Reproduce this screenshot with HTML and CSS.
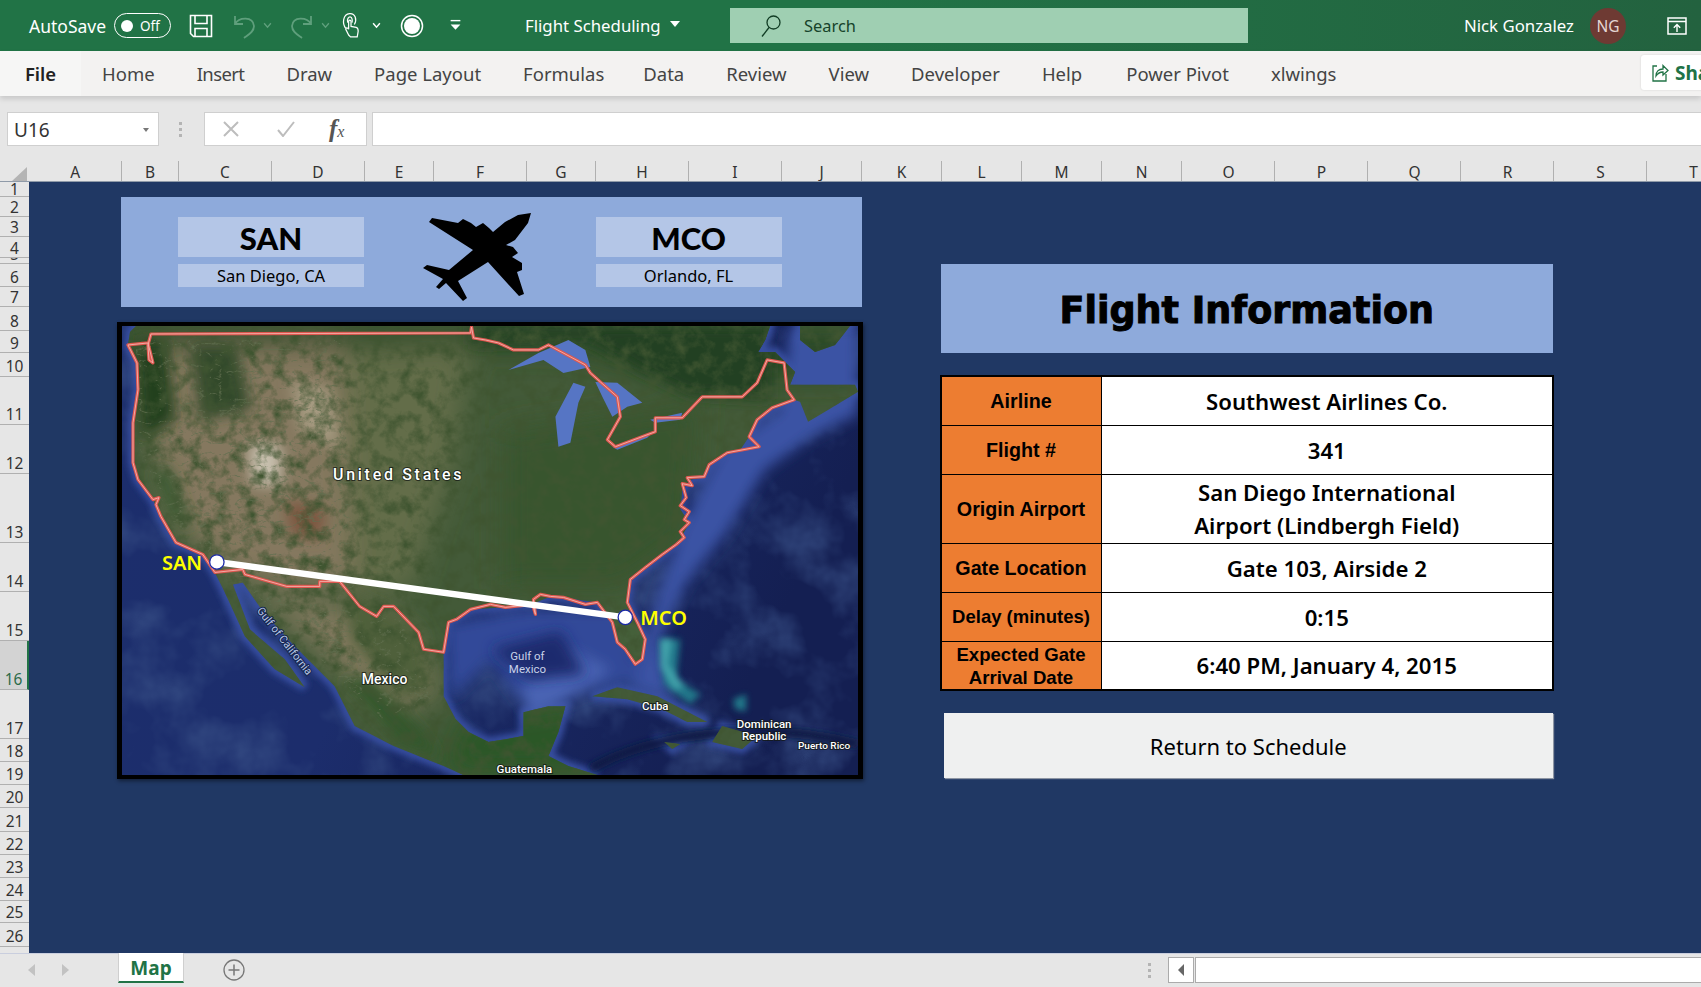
FILE: index.html
```html
<!DOCTYPE html>
<html lang="en">
<head>
<meta charset="utf-8">
<title>Flight Scheduling - Excel</title>
<link rel="stylesheet" href="styles.css">
</head>
<body>
<div class="app">
  <header class="titlebar">
    <span class="autosave">AutoSave</span>
    <span class="toggle"><i class="knob"></i><span class="toggle-text">Off</span></span>
    <svg class="qa qa-save" viewBox="0 0 24 24"><path d="M1.500 1.500H22.500V22.500H4.500L1.500 19.500Z M6 1.500V9.500H18V1.500 M6 22.500V14.500H18V22.500" fill="none" stroke="#fff" stroke-width="1.600"/></svg>
    <svg class="qa qa-undo" viewBox="0 0 26 26"><path d="M4 3V11H12 M4 11C8 4 22 3 23 13C23 19 17 22 13 25" fill="none" stroke="#5f9f7c" stroke-width="1.800"/></svg>
    <svg class="chev dim" viewBox="0 0 8 6"><path d="M1 1L4 4.500L7 1" fill="none" stroke="#5f9f7c" stroke-width="1.200"/></svg>
    <svg class="qa qa-redo" viewBox="0 0 26 26"><path d="M22 3V11H14 M22 11C18 4 4 3 3 13C3 19 9 22 13 25" fill="none" stroke="#5f9f7c" stroke-width="1.800"/></svg>
    <svg class="chev dim" viewBox="0 0 8 6"><path d="M1 1L4 4.500L7 1" fill="none" stroke="#5f9f7c" stroke-width="1.200"/></svg>
    <svg class="qa qa-touch" viewBox="0 0 22 28"><path d="M5 17C1 12 2 2 9 1.500C15 1 17 8 14 13 M7 11C6 7 8 5 9.500 5C12 5 12 9 11.500 11" fill="none" stroke="#fff" stroke-width="1.300"/><path d="M8 24L5 18C5 16 7 16 8 18V9.500C8 8 10.500 8 10.500 9.500V15L16 16C18 16.500 18 18 18 20L17 26H10Z" fill="#217346" stroke="#fff" stroke-width="1.300"/></svg>
    <svg class="chev chev-touch" viewBox="0 0 8 6"><path d="M1 1L4 4.500L7 1" fill="none" stroke="#fff" stroke-width="1.300"/></svg>
    <svg class="qa qa-rec" viewBox="0 0 24 24"><circle cx="12" cy="12" r="10.500" fill="none" stroke="#fff" stroke-width="1.500"/><circle cx="12" cy="12" r="8" fill="#fff"/></svg>
    <svg class="qa qa-more" viewBox="0 0 12 12"><path d="M1.500 1.500H10.500" stroke="#fff" stroke-width="1.300"/><path d="M1.500 5H10.500L6 10Z" fill="#fff"/></svg>
    <span class="doc">Flight Scheduling</span>
    <i class="doc-caret"></i>
    <div class="search">
      <svg class="search-icon" viewBox="0 0 22 24"><circle cx="13.500" cy="8.500" r="6.500" fill="none" stroke="#123d25" stroke-width="1.300"/><path d="M9 13.500L2 22.500" stroke="#123d25" stroke-width="1.300"/></svg>
      <span>Search</span>
    </div>
    <span class="user">Nick Gonzalez</span>
    <span class="avatar">NG</span>
    <svg class="display-icon" viewBox="0 0 20 18"><rect x="1" y="1" width="18" height="16" fill="none" stroke="#fff" stroke-width="1.500"/><path d="M1 4.500H19" stroke="#fff" stroke-width="1.500"/><path d="M10 15V8M6.800 10.800L10 7.500L13.200 10.800" fill="none" stroke="#fff" stroke-width="1.400"/></svg>
  </header>

  <nav class="ribbon">
    <span class="tab tab-file">File</span>
    <span class="tab">Home</span>
    <span class="tab tab-insert">Insert</span>
    <span class="tab">Draw</span>
    <span class="tab">Page Layout</span>
    <span class="tab tab-formulas">Formulas</span>
    <span class="tab">Data</span>
    <span class="tab">Review</span>
    <span class="tab">View</span>
    <span class="tab">Developer</span>
    <span class="tab tab-help">Help</span>
    <span class="tab">Power Pivot</span>
    <span class="tab">xlwings</span>
    <span class="share">
      <svg class="share-icon" viewBox="0 0 18 20"><path d="M6 3H2V18H15V11" fill="none" stroke="#217346" stroke-width="1.300"/><path d="M5 13C5 8 8 6 12 6V2.500L17 7.500L12 12V9C9 9 7 10 5 13Z" fill="none" stroke="#217346" stroke-width="1.300"/></svg>
      <b>Share</b>
    </span>
  </nav>

  <section class="formula">
    <div class="namebox"><span>U16</span><i class="mini-caret"></i></div>
    <div class="grip"><i></i><i></i><i></i></div>
    <div class="fxbox">
      <svg class="fx-x" viewBox="0 0 16 16"><path d="M1 1L15 15M15 1L1 15" stroke="#bdbdbd" stroke-width="2"/></svg>
      <svg class="fx-c" viewBox="0 0 18 16"><path d="M1 9L6 15L17 1" fill="none" stroke="#bdbdbd" stroke-width="2"/></svg>
      <span class="fx-f"><em>f</em><small>x</small></span>
    </div>
    <div class="input"></div>
  </section>

  <div class="colhead">
    <div class="corner"><i></i></div>
    <span>A</span><span>B</span><span>C</span><span>D</span><span>E</span><span>F</span><span>G</span><span>H</span><span>I</span><span>J</span><span>K</span><span>L</span><span>M</span><span>N</span><span>O</span><span>P</span><span>Q</span><span>R</span><span>S</span><span>T</span>
  </div>

  <main class="body">
    <div class="rowhead">
      <span>1</span><span>2</span><span>3</span><span>4</span><span>5</span><span>6</span><span>7</span><span>8</span><span>9</span><span class="tall">10</span><span class="tall">11</span><span class="tall">12</span><span class="tall">13</span><span class="tall">14</span><span class="tall">15</span><span class="tall sel">16</span><span class="tall">17</span><span class="tall">18</span><span class="tall">19</span><span class="tall">20</span><span class="tall">21</span><span class="tall">22</span><span class="tall">23</span><span class="tall">24</span><span class="tall">25</span><span class="tall">26</span><span class="tall">27</span>
    </div>
    <div class="sheet">
      <div class="route">
        <div class="airport">
          <div class="code">SAN</div>
          <div class="city">San Diego, CA</div>
        </div>
        <svg class="plane" viewBox="423 212 109 90"><path d="M531 213L528 223L515 240L506 245L513 247L518 253L512 257L522 263L522 270L517 272L524 294L519 296L488 262L458 281L467 298L463 301L446 283L439 289L436 287L443 279L423 268L427 265L449 270L473 250L429 222L432 218L458 223L463 219L471 223L476 227L483 223L489 228L493 232L505 222L518 215Z" fill="#000"/></svg>
        <div class="airport">
          <div class="code">MCO</div>
          <div class="city">Orlando, FL</div>
        </div>
      </div>

      <div class="mapframe">
        <svg class="map" viewBox="121 326 737 450" preserveAspectRatio="none">
          <defs>
            <path id="land" d="M127 345L129 332L135 326L770 326L765 340L758 352L775 352L795 372L790 385L805 385L855 385L858 392L825 412L808 422L800 402L794 400L772 408L757 420L749 437L740 450L727 453L709 465L704 477L690 480L682 490L680 510L689 523L680 540L662 555L645 568L630 580L627 603L638 625L645 640L642 660L635 665L625 650L617 643L612 623L597 603L563 598L550 597L533 604L505 608L470 610L448 623L443 653L443 697L455 720L468 733L488 743L523 737L523 713L548 707L565 707L558 733L548 757L568 767L597 776L463 776L443 767L393 747L354 727L334 687L294 647L262 612L242 583L232 585L249 630L284 660L304 688L274 670L244 637L224 593L214 573L202 555L175 543L160 517L152 500L137 480L132 463L132 423L137 390L136 363Z M800 326L850 326L835 345L815 352L800 340Z M592 697L617 688L657 697L707 723L687 723L662 710L627 700Z M722 727L757 737L742 750L712 743Z M664 743L680 745L672 750Z"/>
            <clipPath id="landclip"><use href="#land"/></clipPath>
            <clipPath id="westclip"><path d="M135 340L340 340L355 590L240 580L170 520L135 440Z M250 590L400 620L430 700L380 720L330 670Z"/></clipPath>
            <linearGradient id="sea" x1="0" y1="0" x2="1" y2="0.300">
              <stop offset="0" stop-color="#1c2e6c"/>
              <stop offset="0.500" stop-color="#1c2d6c"/>
              <stop offset="1" stop-color="#141f52"/>
            </linearGradient>
            <filter id="b3" x="-20%" y="-20%" width="140%" height="140%"><feGaussianBlur stdDeviation="3"/></filter>
            <filter id="b7" x="-30%" y="-30%" width="160%" height="160%"><feGaussianBlur stdDeviation="7"/></filter>
            <filter id="b14" x="-40%" y="-40%" width="180%" height="180%"><feGaussianBlur stdDeviation="14"/></filter>
            <filter id="grain" x="0" y="0" width="100%" height="100%">
              <feTurbulence type="fractalNoise" baseFrequency="0.07" numOctaves="5" seed="7"/>
              <feColorMatrix values="0 0 0 0 0.05  0 0 0 0 0.09  0 0 0 0 0.03  2.400 0 0 0 -1.000"/>
            </filter>
            <filter id="ridge" x="0" y="0" width="100%" height="100%">
              <feTurbulence type="turbulence" baseFrequency="0.05 0.09" numOctaves="4" seed="11"/>
              <feColorMatrix values="0 0 0 0 0.12  0 0 0 0 0.16  0 0 0 0 0.08  -9 0 0 0 1.500"/>
            </filter>
            <filter id="seagrain" x="0" y="0" width="100%" height="100%">
              <feTurbulence type="fractalNoise" baseFrequency="0.018" numOctaves="4" seed="3"/>
              <feColorMatrix values="0 0 0 0 0.04  0 0 0 0 0.08  0 0 0 0 0.24  1.800 0 0 0 -0.800"/>
            </filter>
          </defs>

          <rect x="121" y="326" width="737" height="450" fill="url(#sea)"/>
          <rect x="121" y="326" width="737" height="450" filter="url(#seagrain)"/>
          <g filter="url(#b3)">
            <use href="#land" fill="none" stroke="#374fa2" stroke-width="9"/>
          </g>
          <g filter="url(#b7)" fill="#3a52a4">
            <path d="M790 326L858 326L858 415L815 435L765 470L725 535L685 585L660 640L670 700L630 690L650 620L680 530L720 450L780 410Z"/>
            <path d="M445 625L520 610L620 610L640 680L600 690L560 700L530 710L510 690L490 660L450 700Z" fill="#304a99"/>
            <path d="M520 690L570 650L610 670L570 700L530 720Z" fill="#4a64b4"/>
          </g>
          <path d="M490 650L560 632L585 675L530 680Z" fill="#1b2c6e" filter="url(#b7)"/>
          <g filter="url(#b3)" fill="#23808f" opacity=".9">
            <path d="M660 640L680 640L676 680L700 695L690 705L664 685Z"/>
            <path d="M733 700L746 695L746 712L735 710Z"/>
          </g>
          <path d="M660 640L672 640L668 665L684 688L674 690L660 668Z" fill="#4fb5b8" filter="url(#b3)" opacity=".7"/>
          <path d="M590 770C650 735 760 720 858 745" fill="none" stroke="#0f1a45" stroke-width="9" filter="url(#b3)"/>

          <use href="#land" fill="#435a38"/>
          <g clip-path="url(#landclip)">
            <g filter="url(#b14)">
              <path d="M121 326H858V380H680L640 370L560 350L470 350L300 345H121Z" fill="#2c4a28"/>
              <path d="M145 350L340 345L365 470L350 590L240 580L170 520L150 440Z" fill="#85785f"/>
              <path d="M340 350L470 345L450 470L410 590L350 590Z" fill="#646d49"/>
              <path d="M500 430L700 400L690 540L620 590L500 590Z" fill="#38552f"/>
              <path d="M250 590L400 620L440 690L390 720L340 670Z" fill="#83795f"/>
              <path d="M460 720L600 700L600 776L440 776Z" fill="#2c5626"/>
              <path d="M620 600L645 640L640 665L620 640Z" fill="#4a683c"/>
            </g>
            <g filter="url(#b7)">
              <path d="M470 326H770V400L690 395L640 370L590 340L470 345Z" fill="#243f20"/>
              <path d="M134 340L165 340L175 420L140 440Z" fill="#24401f"/>
              <path d="M190 345L235 345L250 410L200 420Z" fill="#30492a"/>
              <path d="M290 380L330 390L340 450L300 430Z" fill="#a59a80"/>
              <path d="M247 445L280 445L280 485L252 485Z" fill="#c8c0ae"/>
              <path d="M285 500L325 510L320 540L290 535Z" fill="#7d5641"/>
              <path d="M150 470L170 470L190 530L170 520Z" fill="#3a5a30"/>
              <path d="M345 590L420 630L430 690L400 700L350 640Z" fill="#4f613a"/>
              <path d="M340 680L400 745L440 760L420 730L370 680Z" fill="#30572a"/>
            </g>
            <rect x="121" y="326" width="737" height="450" filter="url(#grain)"/>
            <g clip-path="url(#westclip)">
              <rect x="121" y="326" width="737" height="450" filter="url(#ridge)" opacity=".7"/>
            </g>
          </g>

          <g fill="#5675c4">
            <path d="M508 370L538 353L568 340L585 350L590 367L563 373L543 360Z"/>
            <path d="M558 447L555 417L573 383L585 387L578 403L570 443Z"/>
            <path d="M595 382L617 383L642 403L627 407L612 417L602 397Z"/>
            <path d="M612 447L652 433L647 438L617 450Z"/>
            <path d="M650 420L682 413L680 420L655 423Z"/>
          </g>

          <path class="uslinebase" d="M150 334L470 333L471 327L473 338L485 340L498 343L513 350L538 350L548 345L585 365L590 373L600 382L617 397L620 417L607 440L615 447L655 432L655 418L682 418L702 397L742 397L757 383L767 360L784 363L787 390L794 400L772 408L757 420L749 437L759 447L727 453L709 465L704 477L687 478L692 486L682 484L686 498L680 506L689 512L684 520L689 523L680 532L684 538L676 545L662 555L645 568L630 580L627 603L638 625L645 640L642 660L635 665L625 650L617 643L612 623L597 603L585 605L563 598L550 597L540 595L533 600L535 615L532 605L505 608L490 605L470 610L456 620L448 623L443 653L423 650L418 633L393 607L383 607L376 617L359 607L339 582L319 582L319 587L286 587L244 575L242 570L214 573L202 555L175 543L160 517L155 505L158 498L152 500L137 480L132 463L132 423L137 390L136 363L127 345L147 343L152 363L148 360L147 345L150 334Z"/>
          <path class="uslinecore" d="M150 334L470 333L471 327L473 338L485 340L498 343L513 350L538 350L548 345L585 365L590 373L600 382L617 397L620 417L607 440L615 447L655 432L655 418L682 418L702 397L742 397L757 383L767 360L784 363L787 390L794 400L772 408L757 420L749 437L759 447L727 453L709 465L704 477L687 478L692 486L682 484L686 498L680 506L689 512L684 520L689 523L680 532L684 538L676 545L662 555L645 568L630 580L627 603L638 625L645 640L642 660L635 665L625 650L617 643L612 623L597 603L585 605L563 598L550 597L540 595L533 600L535 615L532 605L505 608L490 605L470 610L456 620L448 623L443 653L423 650L418 633L393 607L383 607L376 617L359 607L339 582L319 582L319 587L286 587L244 575L242 570L214 573L202 555L175 543L160 517L155 505L158 498L152 500L137 480L132 463L132 423L137 390L136 363L127 345L147 343L152 363L148 360L147 345L150 334Z"/>

          <text class="lb lb-us" x="398" y="480">United States</text>
          <text class="lb lb-mx" x="384" y="685">Mexico</text>
          <text class="lb lb-gm" x="527" y="661">Gulf of</text>
          <text class="lb lb-gm" x="527" y="674">Mexico</text>
          <text class="lb lb-sm" x="655" y="711">Cuba</text>
          <text class="lb lb-sm" x="764" y="729">Dominican</text>
          <text class="lb lb-sm" x="764" y="741">Republic</text>
          <text class="lb lb-xs" x="824" y="750">Puerto Rico</text>
          <text class="lb lb-sm" x="524" y="774">Guatemala</text>
          <text class="lb lb-gc" transform="translate(281 644) rotate(52)">Gulf of California</text>

          <line class="route-line" x1="216" y1="562.500" x2="625" y2="618"/>
          <circle class="dot" cx="216" cy="562.500" r="7.200"/>
          <circle class="dot" cx="625" cy="618" r="7.200"/>
          <text class="pin" x="161" y="571">SAN</text>
          <text class="pin" x="640" y="626">MCO</text>
        </svg>
      </div>

      <div class="info-title">Flight Information</div>

      <div class="info">
        <div class="lbl">Airline</div><div class="val">Southwest Airlines Co.</div>
        <div class="lbl">Flight #</div><div class="val">341</div>
        <div class="lbl">Origin Airport</div><div class="val val-two">San Diego International<br>Airport (Lindbergh Field)</div>
        <div class="lbl">Gate Location</div><div class="val">Gate 103, Airside 2</div>
        <div class="lbl lbl-delay">Delay (minutes)</div><div class="val">0:15</div>
        <div class="lbl lbl-two">Expected Gate<br>Arrival Date</div><div class="val">6:40 PM, January 4, 2015</div>
      </div>

      <div class="return">Return to Schedule</div>
    </div>
  </main>

  <footer class="statusbar">
    <i class="nav-l"></i>
    <i class="nav-r"></i>
    <span class="sheet-tab">Map</span>
    <svg class="add" viewBox="0 0 22 22"><circle cx="11" cy="11" r="10" fill="none" stroke="#777" stroke-width="1.300"/><path d="M11 5.500V16.500M5.500 11H16.500" stroke="#777" stroke-width="1.500"/></svg>
    <div class="grip grip-b"><i></i><i></i><i></i></div>
    <div class="hs-btn"><i></i></div>
    <div class="hs-track"></div>
  </footer>
</div>
</body>
</html>
```
FILE: styles.css
```css
* { box-sizing: border-box; }
html, body { margin: 0; height: 100%; overflow: hidden; }
body { font-family: "Noto Sans", "Open Sans", sans-serif; color: #000; background: #e6e6e6; }
.app { width: 1701px; height: 987px; display: flex; flex-direction: column; overflow: hidden; }

/* title bar */
.titlebar { height: 51px; flex: none; display: flex; align-items: center; color: #fff; background: linear-gradient(90deg, #217346 0, #217346 50%, #23623f 100%); padding-left: 29px; }
.autosave { font-size: 17.500px; width: 85px; }
.toggle { width: 57px; height: 25px; border: 1.500px solid #fff; border-radius: 13px; display: flex; align-items: center; padding-left: 6px; }
.knob { width: 12px; height: 12px; border-radius: 50%; background: #fff; }
.toggle-text { font-size: 13.500px; margin-left: 7px; }
.qa { flex: none; display: block; }
.qa-save { width: 24px; height: 24px; margin-left: 18px; }
.qa-undo { width: 26px; height: 26px; margin-left: 18px; }
.qa-redo { width: 26px; height: 26px; margin-left: 17px; }
.qa-touch { width: 21px; height: 27px; margin-left: 11px; }
.qa-rec { width: 24px; height: 24px; margin-left: 19px; }
.qa-more { width: 13px; height: 13px; margin-left: 25px; }
.chev { width: 9px; height: 7px; margin-left: 6px; flex: none; }
.chev-touch { margin-left: 10px; }
.doc { font-size: 16.800px; margin-left: 63px; width: 142px; white-space: nowrap; }
.doc-caret { width: 0; height: 0; border-left: 5px solid transparent; border-right: 5px solid transparent; border-top: 6px solid #fff; margin-left: 3px; margin-top: -3px; }
.search { width: 518px; height: 35px; margin-left: 50px; background: #9fcfb2; color: #16432a; display: flex; align-items: center; padding-left: 30px; font-size: 16.400px; }
.search-icon { width: 22px; height: 24px; margin-right: 22px; }
.user { font-size: 16.800px; margin-left: auto; white-space: nowrap; }
.avatar { width: 36px; height: 36px; border-radius: 50%; background: #6e3a33; color: #e4d6d3; font-size: 15.500px; display: flex; align-items: center; justify-content: center; margin-left: 16px; }
.display-icon { width: 20px; height: 18px; margin-left: 41px; margin-right: 14px; }

/* ribbon */
.ribbon { height: 45px; flex: none; background: #f3f2f1; display: flex; align-items: stretch; padding-left: 0; box-shadow: 0 3px 5px rgba(0,0,0,.13); position: relative; z-index: 2; }
.tab { font-size: 18.500px; color: #444; display: flex; align-items: center; margin-right: 42px; white-space: nowrap; }
.tab-file { width: 81px; margin-right: 21px; justify-content: center; color: #222; font-weight: 600; background: #f6f6f5; }
.tab-insert { letter-spacing: -.6px; }
.tab-formulas { margin-right: 39px; }
.tab-help { margin-right: 44px; }
.share { position: absolute; left: 1641px; top: 4px; width: 80px; height: 35px; background: #fff; border-radius: 3px; display: flex; align-items: center; padding-left: 10px; color: #217346; font-size: 19px; box-shadow: 0 0 2px rgba(0,0,0,.15); }
.share b { font-weight: 700; margin-left: 6px; }
.share-icon { width: 18px; height: 20px; flex: none; }

/* formula bar */
.formula { height: 51px; flex: none; display: flex; align-items: flex-end; padding-left: 7px; background: #e6e6e6; padding-bottom: 1px; padding-top: 16px; }
.namebox { width: 152px; height: 34px; background: #fff; border: 1px solid #cfcfcf; display: flex; align-items: center; justify-content: space-between; padding: 1px 9px 0 6px; font-size: 19px; color: #333; }
.mini-caret { width: 0; height: 0; border-left: 3.500px solid transparent; border-right: 3.500px solid transparent; border-top: 4px solid #777; }
.grip { display: flex; flex-direction: column; gap: 3px; align-items: center; }
.grip i { width: 3px; height: 3px; background: #b4b4b4; display: block; }
.formula .grip { width: 45px; height: 34px; justify-content: center; padding-right: 3px; }
.fxbox { width: 163px; height: 34px; background: #fff; border: 1px solid #cfcfcf; display: flex; align-items: center; padding-left: 18px; }
.fx-x { width: 16px; height: 16px; }
.fx-c { width: 18px; height: 16px; margin-left: 38px; }
.fx-f { font-family: "Liberation Serif", serif; margin-left: 34px; font-size: 25px; color: #555; font-style: italic; display: flex; align-items: baseline; }
.fx-f em { font-weight: 700; }
.fx-f small { font-size: 16px; }
.input { flex: 1; height: 34px; margin-left: 5px; background: #fff; border: 1px solid #cfcfcf; border-right: 0; }

/* headers */
.colhead { height: 35px; flex: none; display: grid; grid-template-columns: 29px 92.500px 57px 93px 93px 69px 93px 69px 93px 93px 80px 80px 80px 80px 80.500px 93px 93px 93px 93px 93px 93px; background: #e6e6e6; padding-top: 14px; border-bottom: 1px solid #8f9aa8; font-size: 15.500px; color: #333; overflow: hidden; }
.colhead span { display: flex; align-items: center; justify-content: center; border-right: 1px solid #b0b0b0; padding-left: 1px; }
.corner { display: flex; align-items: flex-end; justify-content: flex-end; padding: 0 2px 2px 0; }
.corner i { width: 0; height: 0; border-left: 15px solid transparent; border-bottom: 14px solid #b4b4b4; }

.body { flex: 1; min-height: 0; display: flex; overflow: hidden; }
.rowhead { width: 29px; flex: none; display: grid; grid-template-rows: var(--rows); background: #e6e6e6; font-size: 15.500px; color: #333; overflow: hidden; }
.rowhead span { display: flex; align-items: flex-end; justify-content: center; border-bottom: 1px solid #b0b0b0; line-height: 17px; overflow: hidden; }
.rowhead span:first-child { line-height: 14px; }
.rowhead .tall { line-height: 20px; }
.rowhead .sel { background: #d3d3d3; color: #2c6b4a; border-right: 2px solid #217346; }

:root { --rows: 15px 20px 20px 21px 6px 23px 20px 24px 22px 24px 48px 49px 69px 49px 49px 49px 49px 23px 23px 23px 24px 23px 23px 23px 22px 24px 30px; }

/* sheet: same tracks as the header cells */
.sheet { flex: 1; min-width: 0; background: #203864; display: grid; grid-template-rows: var(--rows); grid-template-columns: 92.500px 57px 93px 93px 69px 93px 69px 93px 93px 80px 80px 80px 80px 80.500px 93px 93px 93px 93px 93px 93px; overflow: hidden; }

.route { grid-column: 2 / 11; grid-row: 2 / 8; margin-left: -.5px; background: #8eaadb; display: flex; justify-content: space-between; padding: 20px 80px 0 57px; }
.airport { width: 186px; display: flex; flex-direction: column; gap: 7px; }
.code { height: 40px; background: #b4c6e7; font-family: Lato, sans-serif; font-weight: 900; font-size: 31px; line-height: 42px; text-align: center; }
.city { height: 23px; background: #b4c6e7; font-size: 16.500px; line-height: 23px; text-align: center; }
.plane { width: 109px; height: 90px; margin: -5px 0 0 -4px; }

.mapframe { grid-column: 2 / 11; grid-row: 8 / 20; margin: 15px -1px 6px -5px; border: 5px solid #000; border-top-width: 4px; border-bottom-width: 4px; box-shadow: 1px 2px 4px rgba(0,0,0,.45); overflow: hidden; min-height: 0; }
.map { display: block; width: 100%; height: 100%; }
.uslinebase { fill: none; stroke: #df5850; stroke-width: 3.200; stroke-linejoin: round; }
.uslinecore { fill: none; stroke: #f3b3ad; stroke-width: .9; stroke-linejoin: round; }
.lb { font-family: Roboto, sans-serif; text-anchor: middle; fill: #fff; paint-order: stroke; stroke: rgba(20,25,20,.75); stroke-width: 2px; }
.lb-us { font-size: 16px; font-weight: 500; letter-spacing: 2.700px; }
.lb-mx { font-size: 14px; font-weight: 500; }
.lb-gm { font-size: 11.500px; fill: #c9d2e8; stroke: none; }
.lb-sm { font-size: 11.500px; font-weight: 500; }
.lb-xs { font-size: 10px; font-weight: 500; }
.lb-gc { font-size: 11px; fill: #b8c6e6; stroke: #16264f; }
.route-line { stroke: #fff; stroke-width: 6.500; }
.dot { fill: #fff; stroke: #1c2aa8; stroke-width: 1.300; }
.pin { font-family: "Noto Sans", sans-serif; font-weight: 600; font-size: 20px; fill: #ffff00; }

.info-title { grid-column: 12 / 19; grid-row: 6 / 10; margin: 0 1px 0 -1px; padding-top: 3px; background: #8eaadb; font-family: "DejaVu Sans", sans-serif; font-weight: 700; font-size: 36.500px; -webkit-text-stroke: 1px #000; display: flex; align-items: center; justify-content: center; }

.info { grid-column: 12 / 19; grid-row: 11 / 17; margin: -2px 0 -1px -2px; border: 2px solid #000; display: grid; grid-template-columns: 160px 1fr; grid-template-rows: 49px 49px 69px 49px 49px 1fr; background: #000; gap: 0; }
.lbl, .val { display: flex; align-items: center; justify-content: center; text-align: center; border-bottom: 1px solid #000; }
.lbl { background: #ed7d31; font-family: "Liberation Sans", sans-serif; font-weight: 700; font-size: 19.700px; border-right: 1px solid #000; }
.val { background: #fff; font-family: "Noto Sans", sans-serif; font-weight: 600; font-size: 22.200px; }
.val-two { line-height: 33.500px; }
.lbl-delay { font-size: 18.500px; }
.lbl-two { font-size: 18.600px; line-height: 23px; }
.lbl:nth-last-child(2), .val:last-child { border-bottom: 0; }

.return { grid-column: 12 / 19; grid-row: 17 / 20; margin: 23px 1px 7px 2px; background: #eff0f0; box-shadow: 1px 1px 1px #8d95a3; display: flex; align-items: center; justify-content: center; font-size: 22px; }

/* bottom bar */
.statusbar { height: 34px; flex: none; background: #e6e6e6; border-top: 1px solid #c9cede; display: flex; align-items: flex-start; position: relative; z-index: 1; }
.nav-l, .nav-r { width: 0; height: 0; border-top: 6px solid transparent; border-bottom: 6px solid transparent; margin-top: 10px; flex: none; }
.nav-l { border-right: 7px solid #c2c2c2; margin-left: 28px; }
.nav-r { border-left: 7px solid #c2c2c2; margin-left: 27px; }
.sheet-tab { width: 66px; height: 30px; margin-left: 49px; margin-top: -1px; background: #fff; border: 1px solid #cfcfcf; border-top: 0; border-bottom: 2px solid #217346; color: #217346; font-weight: 700; font-size: 19px; line-height: 31px; text-align: center; flex: none; }
.add { width: 22px; height: 22px; margin-left: 39px; margin-top: 5px; flex: none; }
.grip-b { margin-left: 901px; margin-top: 9px; width: 6px; }
.hs-btn { width: 26px; height: 26px; margin-left: 16px; margin-top: 3px; background: #fff; border: 1px solid #ababab; display: flex; align-items: center; justify-content: center; flex: none; }
.hs-btn i { width: 0; height: 0; border-top: 6px solid transparent; border-bottom: 6px solid transparent; border-right: 6px solid #666; }
.hs-track { flex: 1; height: 26px; margin-top: 3px; margin-left: 1px; background: #fff; border: 1px solid #ababab; border-right: 0; }
```
